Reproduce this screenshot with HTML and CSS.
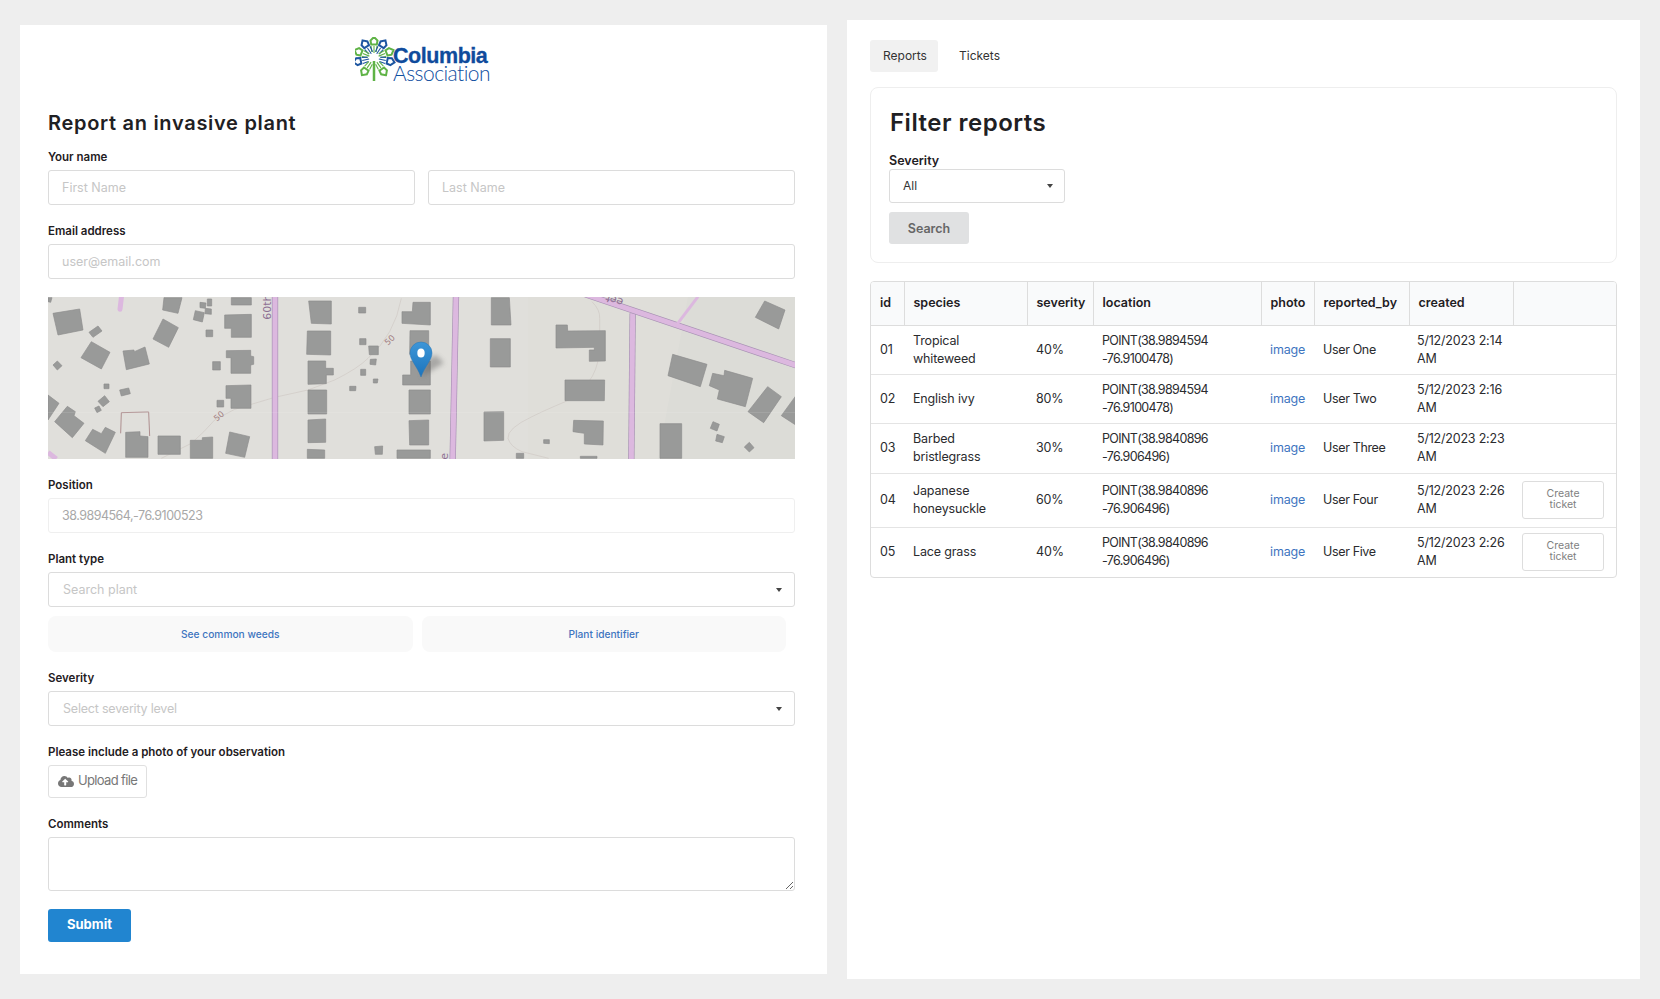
FILE: index.html
```html
<!DOCTYPE html>
<html lang="en">
<head>
<meta charset="utf-8">
<title>Report an invasive plant</title>
<link rel="stylesheet" href="styles.css">
</head>
<body>
<main class="page">
  <section class="panel panel-form">
    <div class="logo-row">
      <svg class="logo" width="140" height="46" viewBox="0 0 140 46">
        <defs>
          <g id="petal">
            <path class="petal-line" d="M0 -5V-12"/>
            <path class="petal-line" d="M-2.200 -6L-3 -12"/>
            <path class="petal-line" d="M2.200 -6L3 -12"/>
            <path class="petal-diamond" d="M0 -21L3.500 -17.500L2.800 -13.500H-2.800L-3.500 -17.500Z"/>
          </g>
        </defs>
        <g transform="translate(19,21)">
          <g class="green"><use href="#petal"/></g>
          <g class="blue"><use href="#petal" transform="rotate(-33)"/><use href="#petal" transform="rotate(33)"/></g>
          <g class="green"><use href="#petal" transform="rotate(-68)"/><use href="#petal" transform="rotate(68)"/></g>
          <g class="blue"><use href="#petal" transform="rotate(-102)"/><use href="#petal" transform="rotate(102)"/></g>
          <g class="green"><use href="#petal" transform="rotate(-145)"/><use href="#petal" transform="rotate(145)"/></g>
          <path class="stem" d="M0 3V23"/>
        </g>
        <text class="logo-bold" x="38" y="26">Columbia</text>
        <text class="logo-thin" x="38" y="44">Association</text>
      </svg>
    </div>
    <h1 class="form-title">Report an invasive plant</h1>
    <div class="field field-first">
      <label class="label">Your name</label>
      <div class="two-col">
        <input class="input" placeholder="First Name">
        <input class="input" placeholder="Last Name">
      </div>
    </div>
    <div class="field">
      <label class="label">Email address</label>
      <input class="input" placeholder="user@email.com">
    </div>
    <svg class="map" viewBox="0 0 747 162" width="747" height="162">
      <rect width="747" height="162" fill="#e0dfdb"/>
      <polygon points="480,0 747,0 747,162 480,162" fill="#dfded9"/>
      <polygon points="640,0 747,0 747,162 610,162" fill="#dcdcd7"/>
      <g transform="translate(0,-2) scale(0.33333)">
        <g class="contour">
          <path d="M340 490L430 445Q470 410 500 375L560 343L680 307L780 285L860 255Q930 220 960 190Q1040 120 1060 10"/>
        </g>
        <g class="road">
          <path class="casing" d="M681 0V495"/><path class="fill" d="M681 0V495"/>
          <path class="fill" d="M221 0L216 43" stroke-linecap="round"/>
          <path class="fill" d="M0 472L25 492"/>
        </g>
        <g class="bld">
          <polygon points="0,8 12,8 8,22 0,20"/>
          <polygon points="15,55 95,42 105,105 30,120"/>
          <polygon points="123,112 150,93 162,108 135,127"/>
          <polygon points="130,140 186,172 160,222 99,188"/>
          <polygon points="225,168 258,165 259,170 291,156 304,207 235,224"/>
          <polygon points="348,8 402,8 390,55 344,45"/>
          <polygon points="345,72 391,98 362,157 315,132"/>
          <polygon points="456,22 474,24 472,40 456,38"/>
          <polygon points="478,12 491,12 491,33 478,33"/>
          <polygon points="472,40 490,42 490,58 471,56"/>
          <polygon points="442,47 469,53 463,81 436,74"/>
          <polygon points="474,105 494,105 494,125 474,125"/>
          <polygon points="550,8 610,8 610,30 550,30"/>
          <polygon points="530,60 610,58 610,127 550,127 550,100 530,100"/>
          <polygon points="535,167 608,166 608,183 617,185 617,208 608,210 608,235 549,235 549,188 535,188"/>
          <polygon points="494,200 517,200 517,225 494,225"/>
          <polygon points="15,210 28,198 42,212 28,225"/>
          <polygon points="168,267 183,267 183,281 168,281"/>
          <polygon points="215,285 242,279 247,296 220,303"/>
          <polygon points="150,319 170,302 184,320 165,335"/>
          <polygon points="140,339 153,333 160,346 147,353"/>
          <polygon points="0,300 33,325 0,375"/>
          <polygon points="20,380 58,334 82,350 78,362 108,385 73,428"/>
          <polygon points="112,437 134,403 160,416 172,397 202,412 172,475"/>
          <polygon points="534,272 609,270 609,340 549,340 549,310 534,310"/>
          <polygon points="507,316 527,316 527,336 507,336"/>
          <polygon points="233,412 276,410 276,423 300,425 300,487 233,487"/>
          <polygon points="330,423 397,423 397,478 330,478"/>
          <polygon points="427,436 463,436 463,428 494,426 494,490 427,490"/>
          <polygon points="545,411 605,425 590,487 533,475"/>
          <polygon points="782,18 850,18 850,87 790,85"/>
          <polygon points="778,108 848,108 848,180 776,178"/>
          <polygon points="780,198 833,198 833,220 856,220 856,240 835,240 835,266 780,268"/>
          <polygon points="780,285 836,285 836,357 780,357"/>
          <polygon points="780,375 833,372 833,442 780,443"/>
          <polygon points="778,463 830,465 830,490 778,490"/>
          <polygon points="932,37 953,37 953,54 932,54"/>
          <polygon points="935,131 954,131 954,149 935,149"/>
          <polygon points="962,153 991,153 991,179 964,179"/>
          <polygon points="967,193 985,192 983,210 966,208"/>
          <polygon points="938,223 953,223 953,241 938,241"/>
          <polygon points="976,252 990,252 988,264 976,264"/>
          <polygon points="905,274 924,274 923,287 905,287"/>
          <polygon points="980,455 1004,453 1003,478 982,478"/>
          <polygon points="1062,50 1093,50 1095,22 1147,22 1147,90 1062,85"/>
          <polygon points="1086,107 1142,107 1142,180 1085,178"/>
          <polygon points="1064,240 1088,240 1088,198 1147,198 1147,270 1064,270"/>
          <polygon points="1083,285 1147,285 1147,357 1083,357"/>
          <polygon points="1083,377 1142,375 1142,450 1085,450"/>
          <polygon points="1047,465 1147,465 1147,490 1047,490"/>
        </g>
        <path class="fence" d="M218 415L220 353L302 351L305 423"/>
        <text class="lbl-road" transform="translate(668,74) rotate(-90)">60th</text>
        <text class="lbl-contour" transform="translate(1020,152) rotate(-45)">50</text>
        <text class="lbl-contour" transform="translate(506,380) rotate(-40)">50</text>
      </g>
      <g transform="translate(374,-2) scale(0.33333)">
        <g class="contour">
          <path d="M510 20Q535 45 533 70V170Q525 230 500 260Q470 300 430 320Q370 345 330 365Q255 400 258 430Q265 455 300 470L380 490"/>
        </g>
        <g class="road">
          <path class="casing" d="M102 0L92 495"/><path class="fill" d="M102 0L92 495"/>
          <path class="casing" d="M632 55L628 495"/><path class="fill" d="M632 55L628 495"/>
          <path class="casing" d="M490 -2L1125 212"/><path class="fill" d="M490 -2L1125 212"/>
          <path class="fill thin" d="M765 88L828 5"/>
        </g>
        <g class="bld">
          <polygon points="208,8 262,8 267,90 208,90"/>
          <polygon points="205,131 265,131 265,216 205,216"/>
          <polygon points="402,90 436,90 437,108 550,107 550,198 502,199 502,165 517,165 517,157 402,159"/>
          <polygon points="429,255 548,255 547,317 429,317"/>
          <polygon points="186,351 245,350 245,436 186,438"/>
          <polygon points="455,376 544,378 543,450 487,447 487,415 453,410"/>
          <polygon points="365,434 382,434 382,446 365,445"/>
          <polygon points="283,475 305,475 305,490 283,490"/>
          <polygon points="475,484 525,484 525,490 475,490"/>
          <polygon points="714,386 779,386 779,490 714,490"/>
          <polygon points="752,178 855,208 835,275 738,242"/>
          <polygon points="872,235 906,242 908,226 992,250 970,335 886,312 892,285 862,272"/>
          <polygon points="1037,275 1078,305 1025,383 978,350"/>
          <polygon points="1121,303 1121,390 1078,362"/>
          <polygon points="1028,18 1089,45 1070,102 1000,67"/>
          <polygon points="873,380 892,388 885,408 865,400"/>
          <polygon points="885,418 907,425 901,443 881,438"/>
          <polygon points="982,442 996,458 982,471 967,456"/>
        </g>
        <text class="lbl-road" transform="translate(78,494) rotate(-90)">e</text>
        <text class="lbl-road" transform="translate(606,13) rotate(198)">eet</text>
      </g>
      <path class="seam" d="M0 115.500H747"/>
      <defs>
        <linearGradient id="pin" x1="0" y1="0" x2="0" y2="1">
          <stop offset="0" stop-color="#3d96d8"/>
          <stop offset="1" stop-color="#1c74bc"/>
        </linearGradient>
        <filter id="soft" x="-50%" y="-50%" width="200%" height="200%"><feGaussianBlur stdDeviation="2.500"/></filter>
      </defs>
      <polygon points="373,80 396,66 388,58 380,62" fill="#555" opacity=".4" filter="url(#soft)"/>
      <path d="M373 80C369 69 362 63 362 56A11 11 0 0 1 384 56C384 63 377 69 373 80Z" fill="url(#pin)" stroke="#2a76b4" stroke-width=".5"/>
      <ellipse cx="373" cy="56" rx="3.700" ry="4.500" fill="#fff"/>
    </svg>
    <div class="field">
      <label class="label">Position</label>
      <input class="input input-soft" placeholder="38.9894564,-76.9100523">
    </div>
    <div class="field">
      <label class="label">Plant type</label>
      <div class="select select-wide"><span class="ph">Search plant</span><i class="caret"></i></div>
      <div class="help-row">
        <a class="help-btn">See common weeds</a>
        <a class="help-btn">Plant identifier</a>
      </div>
    </div>
    <div class="field">
      <label class="label">Severity</label>
      <div class="select select-wide"><span class="ph ph-tight">Select severity level</span><i class="caret"></i></div>
    </div>
    <div class="field">
      <label class="label">Please include a photo of your observation</label>
      <button class="upload" type="button">
        <svg class="upload-icon" viewBox="0 0 640 512" width="16" height="13"><path d="M537.600 226.600c4.100-10.700 6.400-22.400 6.400-34.600 0-53-43-96-96-96-19.700 0-38.100 6-53.300 16.200C367 64.200 315.300 32 256 32c-88.400 0-160 71.600-160 160 0 2.700.1 5.400.2 8.100C40.200 219.800 0 273.200 0 336c0 79.500 64.500 144 144 144h368c70.700 0 128-57.300 128-128 0-61.900-44-113.600-102.400-125.400zM393.400 288H328v112c0 8.800-7.200 16-16 16h-48c-8.800 0-16-7.200-16-16V288h-65.400c-14.300 0-21.400-17.200-11.300-27.300l105.400-105.400c6.200-6.200 16.400-6.200 22.600 0l105.400 105.400c10.100 10.100 2.900 27.300-11.300 27.300z"/></svg>
        <span class="upload-text">Upload file</span>
      </button>
    </div>
    <div class="field">
      <label class="label">Comments</label>
      <textarea class="textarea"></textarea>
    </div>
    <button class="submit" type="button">Submit</button>
  </section>

  <section class="panel panel-list">
    <nav class="tabs">
      <a class="tab tab-active">Reports</a>
      <a class="tab">Tickets</a>
    </nav>
    <div class="card">
      <h2 class="card-title">Filter reports</h2>
      <label class="label label-filter">Severity</label>
      <div class="select select-filter"><span>All</span><i class="caret"></i></div>
      <button class="search" type="button">Search</button>
    </div>
    <div class="table-wrap">
      <table class="table">
        <colgroup>
          <col class="c1"><col class="c2"><col class="c3"><col class="c4"><col class="c5"><col class="c6"><col class="c7"><col class="c8">
        </colgroup>
        <thead>
          <tr><th>id</th><th>species</th><th>severity</th><th>location</th><th>photo</th><th>reported_by</th><th>created</th><th></th></tr>
        </thead>
        <tbody>
          <tr class="r1"><td>01</td><td>Tropical<br>whiteweed</td><td>40%</td><td class="loc">POINT(38.9894594<br>-76.9100478)</td><td><a class="link">image</a></td><td class="who">User One</td><td class="when">5/12/2023 2:14<br>AM</td><td></td></tr>
          <tr class="r2"><td>02</td><td>English ivy</td><td>80%</td><td class="loc">POINT(38.9894594<br>-76.9100478)</td><td><a class="link">image</a></td><td class="who">User Two</td><td class="when">5/12/2023 2:16<br>AM</td><td></td></tr>
          <tr class="r3"><td>03</td><td>Barbed<br>bristlegrass</td><td>30%</td><td class="loc">POINT(38.9840896<br>-76.906496)</td><td><a class="link">image</a></td><td class="who">User Three</td><td class="when">5/12/2023 2:23<br>AM</td><td></td></tr>
          <tr class="r4"><td>04</td><td>Japanese<br>honeysuckle</td><td>60%</td><td class="loc">POINT(38.9840896<br>-76.906496)</td><td><a class="link">image</a></td><td class="who">User Four</td><td class="when">5/12/2023 2:26<br>AM</td><td><button class="ticket" type="button">Create<br>ticket</button></td></tr>
          <tr class="r5"><td>05</td><td>Lace grass</td><td>40%</td><td class="loc">POINT(38.9840896<br>-76.906496)</td><td><a class="link">image</a></td><td class="who">User Five</td><td class="when">5/12/2023 2:26<br>AM</td><td><button class="ticket" type="button">Create<br>ticket</button></td></tr>
        </tbody>
      </table>
    </div>
  </section>
</main>
</body>
</html>
```
FILE: styles.css
```css
* { box-sizing: border-box; }
html, body { margin: 0; padding: 0; }
body {
  background: #eeeeee;
  color: #1f2023;
  font-family: "Inter", "Liberation Sans", sans-serif;
  font-size: 13px;
  height: 999px;
  overflow: hidden;
}
.page {
  display: flex;
  align-items: flex-start;
  gap: 20px;
  padding: 20px 20px 0;
}
.panel { background: #fff; }
.panel-form {
  width: 807px;
  height: 949px;
  margin-top: 5px;
  padding: 13px 32px 0 28px;
}
.panel-list {
  width: 793px;
  height: 959px;
  padding: 20px 23px 0;
}

/* logo */
.logo-row { display: flex; justify-content: center; padding-left: 7px; height: 44px; }
.logo { display: block; margin-top: -1px; }
.logo .green { color: #5fb346; }
.logo .blue { color: #1d55a0; }
.petal-line { stroke: currentColor; stroke-width: 1.100; fill: none; }
.petal-diamond { fill: none; stroke: currentColor; stroke-width: 2; }
.stem { stroke: #5fb346; stroke-width: 2.500; }
.logo-bold {
  font-family: "Liberation Sans", sans-serif;
  font-weight: 700;
  font-size: 21.500px;
  letter-spacing: -0.450px;
  fill: #0f4b9c;
  stroke: #0f4b9c;
  stroke-width: .3px;
}
.logo-thin {
  font-family: "Lato", sans-serif;
  font-weight: 300;
  font-size: 21px;
  letter-spacing: -0.550px;
  fill: #0f4f9f;
}

/* form */
.form-title {
  margin: 29px 0 15px;
  font-size: 20px;
  line-height: 24px;
  font-weight: 600;
  letter-spacing: 0.700px;
  color: #1f2023;
}
.field { margin-top: 19px; }
.field-first { margin-top: 0; }
.label {
  display: block;
  font-size: 11.500px;
  line-height: 14px;
  font-weight: 600;
  margin-bottom: 6px;
  color: #1f2023;
}
.two-col { display: grid; grid-template-columns: 367px 367px; gap: 13px; }
.input {
  display: block;
  width: 100%;
  height: 35px;
  border: 1px solid #dcdcdc;
  border-radius: 3px;
  padding: 0 13px;
  font: 12.500px "Inter", "Liberation Sans", sans-serif;
  color: #333;
  background: #fff;
  outline: none;
}
.input::placeholder { color: #c6c6c6; opacity: 1; }
.input-soft { border-color: #efefef; letter-spacing: -0.500px; }
.input-soft::placeholder { color: #a8a8a8; }
.map {
  display: block;
  margin-top: 18px;
}
.bld polygon { fill: #999a99; stroke: #8c8c8c; stroke-width: 2; }
.road path { fill: none; }
.road .casing { stroke: #a892b4; stroke-width: 19; }
.road .fill { stroke: #dcb8df; stroke-width: 15; }
.road .thin { stroke-width: 9; }
.contour path { fill: none; stroke: #cfc9c4; stroke-width: 2; }
.fence { fill: none; stroke: #a47e80; stroke-width: 2.500; }
.lbl-road { font-family: "DejaVu Sans", sans-serif; font-size: 33px; fill: #8d6f93; }
.lbl-contour { font-family: "DejaVu Sans", sans-serif; font-size: 25px; fill: #a07c80; }
.seam { stroke: #fff; stroke-opacity: .1; stroke-width: 1; }

.select {
  display: flex;
  align-items: center;
  justify-content: space-between;
  border: 1px solid #dcdcdc;
  border-radius: 3px;
  background: #fff;
}
.select-wide { height: 35px; padding: 0 12px 1px 14px; font-size: 12.500px; }
.select-filter { width: 176px; height: 34px; padding: 0 11px 2px 13px; font-size: 12px; color: #333; }
.ph { color: #c6c6c6; }
.ph-tight { letter-spacing: -0.200px; }
.caret {
  width: 0;
  height: 0;
  border-left: 3.500px solid transparent;
  border-right: 3.500px solid transparent;
  border-top: 4px solid #444;
  margin-top: 2px;
}
.help-row { display: flex; gap: 9px; margin-top: 9px; width: 738px; }
.help-btn {
  flex: 1;
  height: 36px;
  display: flex;
  align-items: center;
  justify-content: center;
  background: #f9f9f9;
  border-radius: 8px;
  color: #3e75bf;
  font-size: 10.200px;
  font-weight: 500;
  padding-bottom: 1px;
}
.upload {
  display: flex;
  align-items: center;
  gap: 3px;
  width: 99px;
  height: 33px;
  padding: 0 0 0 9px;
  background: #fff;
  border: 1px solid #e0e0e0;
  border-radius: 3px;
  color: #777;
  font: 13px "Inter", "Liberation Sans", sans-serif;
  white-space: nowrap;
}
.upload-text { letter-spacing: -0.650px; margin: 0 0 3px 1px; }
.upload-icon { fill: #777; flex: none; }
.textarea {
  display: block;
  width: 100%;
  height: 54px;
  border: 1px solid #dcdcdc;
  border-radius: 3px;
  background: #fff;
  outline: none;
}
.submit {
  display: block;
  margin-top: 18px;
  width: 83px;
  height: 33px;
  padding: 0 0 3px;
  border: 0;
  border-radius: 3px;
  background: #2185d0;
  color: #fff;
  font: 700 13px "Inter", "Liberation Sans", sans-serif;
}

/* right */
.tabs { display: flex; gap: 7px; }
.tab {
  height: 32px;
  display: flex;
  align-items: center;
  padding: 0 0 2px 11px;
  border-radius: 3px;
  font-size: 12px;
  color: #333;
}
.tab-active { background: #f1f1f1; width: 68px; padding-left: 13px; }
.tab + .tab { margin-left: 3px; }
.card {
  margin-top: 15px;
  height: 176px;
  border: 1px solid #eeeeee;
  border-radius: 8px;
  padding: 21px 18px 0;
}
.card-title {
  margin: 0 0 0 1px;
  font-size: 24px;
  line-height: 28px;
  font-weight: 600;
  letter-spacing: 0.500px;
  color: #1f2023;
}
.label-filter { margin: 17px 0 1px; font-size: 12.500px; }
.search {
  display: block;
  margin-top: 9px;
  width: 80px;
  height: 32px;
  border: 0;
  border-radius: 3px;
  background: #e0e1e2;
  color: #666;
  font: 600 12.500px "Inter", "Liberation Sans", sans-serif;
}
.table-wrap {
  margin-top: 18px;
  border: 1px solid #dddddd;
  border-radius: 4px;
  overflow: hidden;
}
.table {
  width: 745px;
  table-layout: fixed;
  border-collapse: collapse;
  font-size: 12.500px;
  line-height: 18px;
}
.c1 { width: 33px; }
.c2 { width: 123px; }
.c3 { width: 66px; }
.c4 { width: 168px; }
.c5 { width: 53px; }
.c6 { width: 95px; }
.c7 { width: 104px; }
.c8 { width: 103px; }
.table th {
  height: 43px;
  background: #f9fafb;
  font-weight: 600;
  text-align: left;
  padding: 0 9px;
  border-bottom: 1px solid #dddddd;
  border-left: 1px solid #dddddd;
  white-space: nowrap;
}
.table th:first-child, .table td:first-child { border-left: 0; }
.table td {
  padding: 0 9px;
  color: #2a2b2e;
  white-space: nowrap;
  letter-spacing: -0.150px;
}
.table td.loc { letter-spacing: -0.650px; }
.table td.who { letter-spacing: -0.350px; }
.table td.when { letter-spacing: -0.200px; padding-left: 8px; }
.table tbody tr + tr td { border-top: 1px solid #e4e4e4; }
.r1 td { height: 49px; }
.r2 td { height: 49px; }
.r3 td { height: 50px; }
.r4 td { height: 54px; }
.r5 td { height: 50px; }
.link { color: #3e75bf; }
.ticket {
  display: block;
  width: 82px;
  height: 38px;
  padding: 0 0 3px;
  background: #fff;
  border: 1px solid #dddddd;
  border-radius: 3px;
  color: #808080;
  font: 10.500px/11px "Inter", "Liberation Sans", sans-serif;
}
```
